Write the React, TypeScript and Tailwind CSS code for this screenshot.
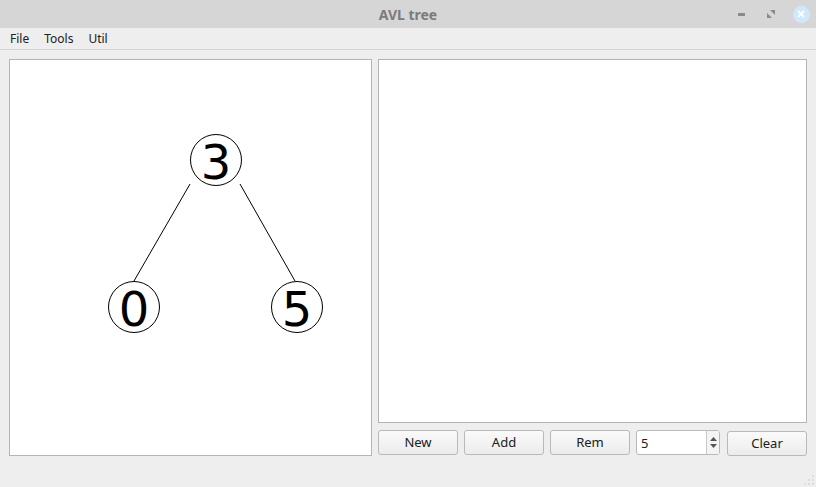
import React from "react";

const font = { fontFamily: '"Noto Sans", "DejaVu Sans", sans-serif' };

const TitleBar = () => (
  <div className="relative flex h-[28px] items-center justify-center bg-[#d6d6d6]">
    <span className="text-[14px] font-bold text-[#7b7b7b]">AVL tree</span>
    <div className="absolute right-0 top-0 flex h-full items-center">
      <div className="flex w-[30px] justify-center">
        <div className="h-[3px] w-[7px] bg-[#8a8a8a]" />
      </div>
      <div className="flex w-[30px] justify-center">
        <svg width="8" height="8" viewBox="0 0 8 8">
          <path d="M0 3 L0 8 L5 8 Z" fill="#8a8a8a" />
          <path d="M3 0 L8 0 L8 5 Z" fill="#8a8a8a" />
        </svg>
      </div>
      <div className="flex w-[30px] justify-center">
        <div className="flex h-[17px] w-[17px] items-center justify-center rounded-full bg-[#cfe8fc]">
          <svg width="8" height="8" viewBox="0 0 8 8">
            <path d="M1 1 L7 7 M7 1 L1 7" stroke="#ffffff" strokeWidth="1.8" />
          </svg>
        </div>
      </div>
    </div>
  </div>
);

const MenuBar = () => (
  <div className="flex h-[22px] items-center gap-[15px] border-b border-[#d2d2d2] bg-[#eeeeee] px-[10px] text-[12px] text-[#202020]">
    <span>File</span>
    <span>Tools</span>
    <span>Util</span>
  </div>
);

const Node = ({ x, y, label }: { x: number; y: number; label: string }) => (
  <g>
    <circle cx={x} cy={y} r={25.5} fill="white" stroke="black" strokeWidth={1} />
    <text
      x={x}
      y={y + 19}
      textAnchor="middle"
      fontSize={48}
      fontFamily='"DejaVu Sans", sans-serif'
      fill="black"
    >
      {label}
    </text>
  </g>
);

const TreeView = () => (
  <div className="h-[397px] w-[363px] border border-[#b4b4b4] bg-white">
    <svg width="361" height="395">
      <line x1={180} y1={124} x2={124} y2={221} stroke="black" strokeWidth={1} />
      <line x1={230} y1={124} x2={285} y2={221} stroke="black" strokeWidth={1} />
      <Node x={206} y={100} label="3" />
      <Node x={124} y={247} label="0" />
      <Node x={287} y={247} label="5" />
    </svg>
  </div>
);

const Button = ({ label }: { label: string }) => (
  <button className="h-[25px] w-[80px] rounded-[3px] border border-[#b9b9b9] bg-gradient-to-b from-[#fafafa] to-[#ececec] text-[13px] text-[#202020]">
    {label}
  </button>
);

const SpinBox = () => (
  <div className="flex h-[25px] w-[84px] rounded-[3px] border border-[#b9b9b9] bg-white">
    <div className="flex flex-1 items-center pl-[4px] pt-[2px] text-[13px] text-[#202020]">5</div>
    <div className="flex w-[13px] flex-col items-center justify-center gap-[3px] border-l border-[#c8c8c8] bg-[#f4f4f4]">
      <svg width="7" height="4" viewBox="0 0 7 4">
        <path d="M0 4 L3.5 0 L7 4 Z" fill="#555" />
      </svg>
      <svg width="7" height="4" viewBox="0 0 7 4">
        <path d="M0 0 L3.5 4 L7 0 Z" fill="#555" />
      </svg>
    </div>
  </div>
);

export default function App() {
  return (
    <div className="relative h-[487px] w-[816px] bg-[#eeeeee]" style={font}>
      <TitleBar />
      <MenuBar />
      <div className="flex gap-[6px] px-[9px] pt-[9px]">
        <TreeView />
        <div className="flex flex-col gap-[7px]">
          <div className="h-[364px] w-[429px] border border-[#b4b4b4] bg-white" />
          <div className="flex gap-[6px]">
            <Button label="New" />
            <Button label="Add" />
            <Button label="Rem" />
            <SpinBox />
            <div className="ml-[1px]">
              <Button label="Clear" />
            </div>
          </div>
        </div>
      </div>
      <svg className="absolute bottom-[1px] right-[1px]" width="12" height="12" viewBox="0 0 12 12">
        {[
          [10, 2],
          [10, 6],
          [6, 6],
          [10, 10],
          [6, 10],
          [2, 10],
        ].map(([cx, cy], i) => (
          <rect key={i} x={cx - 0.5} y={cy - 0.5} width={1} height={1} fill="#b0b0b0" />
        ))}
      </svg>
    </div>
  );
}
